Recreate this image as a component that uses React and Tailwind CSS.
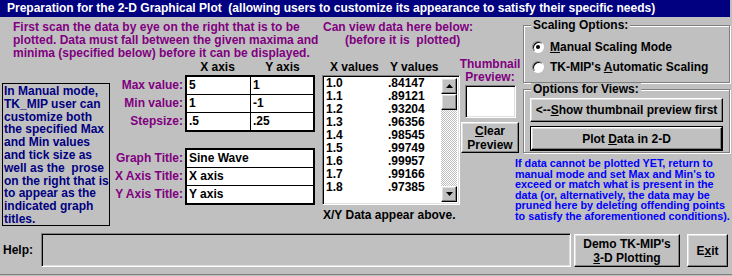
import React from "react";

const raised =
  "border border-t-white border-l-white border-r-black border-b-black shadow-[inset_-1px_-1px_0_#808080,inset_1px_1px_0_#dfdfdf]";
const sunken =
  "border border-t-[#808080] border-l-[#808080] border-r-white border-b-white shadow-[inset_1px_1px_0_#000,inset_-1px_-1px_0_#dfdfdf]";
const etched = "border border-[#808080] shadow-[inset_1px_1px_0_#fff,1px_1px_0_#fff]";

const listData = [
  ["1.0", ".84147"],
  ["1.1", ".89121"],
  ["1.2", ".93204"],
  ["1.3", ".96356"],
  ["1.4", ".98545"],
  ["1.5", ".99749"],
  ["1.6", ".99957"],
  ["1.7", ".99166"],
  ["1.8", ".97385"],
];

function Btn({ children, className = "", isDefault = false }) {
  return (
    <div className={`${isDefault ? "border border-black" : ""} ${className}`}>
      <div className={`h-full w-full flex flex-col items-center justify-center leading-[14px] ${raised}`}>
        {children}
      </div>
    </div>
  );
}

function Radio({ checked }) {
  return (
    <span className="inline-flex w-[12px] h-[12px] rounded-full bg-white border border-t-[#808080] border-l-[#808080] border-r-white border-b-white shadow-[inset_1px_1px_0_#000] items-center justify-center">
      {checked && <span className="w-[4px] h-[4px] rounded-full bg-black" />}
    </span>
  );
}

function GroupBox({ label, className = "", children }) {
  return (
    <div className={`relative ${etched} ${className}`}>
      <span className="absolute -top-[7px] left-[7px] px-[2px] bg-[#c0c0c0] leading-[13px] text-black">
        {label}
      </span>
      {children}
    </div>
  );
}

// labels on the left, white table of cells on the right
function FormGrid({ labels, rows, widths }) {
  return (
    <div className="flex">
      <div className="w-[73px] flex flex-col pt-[2px] text-right text-[#800080]">
        {labels.map((l, i) => (
          <div key={i} className="h-[18px] leading-[17px] whitespace-nowrap">
            {l}
          </div>
        ))}
      </div>
      <div className="ml-[2px] border-2 border-black bg-white">
        {rows.map((r, i) => (
          <div
            key={i}
            className={`flex ${i < rows.length - 1 ? "h-[18px] border-b border-black" : "h-[17px]"}`}
          >
            {r.map((c, j) => (
              <div
                key={j}
                className={`pl-[2px] leading-[17px] text-black ${widths[j]} ${j < r.length - 1 ? "border-r border-black" : ""}`}
              >
                {c}
              </div>
            ))}
          </div>
        ))}
      </div>
    </div>
  );
}

function Arrow({ down = false }) {
  return (
    <svg width="7" height="4" viewBox="0 0 7 4" className={down ? "rotate-180" : ""}>
      <path d="M3.5 0L7 4H0z" fill="#000" />
    </svg>
  );
}

export default function App() {
  return (
    <div className="w-[732px] h-[276px] bg-[#c0c0c0] flex flex-col overflow-hidden font-['Liberation_Sans',Arial,sans-serif] font-bold text-[12px] text-black">
      {/* caption bar */}
      <div className="h-[17px] mr-[2px] bg-[#000080] text-white pl-[7px] leading-[17px] whitespace-pre">
        Preparation for the 2-D Graphical Plot  (allowing users to customize its appearance to satisfy their specific needs)
      </div>

      <div className="h-[216px] flex">
        {/* left column */}
        <div className="w-[320px] flex flex-col">
          <p className="pl-[13px] pt-[4px] text-[#800080] leading-[13px] whitespace-nowrap">
            First scan the data by eye on the right that is to be
            <br />
            plotted. Data must fall between the given maxima and
            <br />
            minima (specified below) before it can be displayed.
          </p>
          <div className="flex items-start">
            <div className="mt-[23px] ml-[2px] w-[108px] h-[143px] border border-black px-[1px] pt-[1px] text-[#000080] leading-[12.8px] whitespace-nowrap">
              In Manual mode,
              <br />
              TK_MIP user can
              <br />
              customize both
              <br />
              the specified Max
              <br />
              and Min values
              <br />
              and tick size as
              <br />
              well as the&nbsp; prose
              <br />
              on the right that is
              <br />
              to appear as the
              <br />
              indicated graph
              <br />
              titles.
            </div>
            <div className="flex flex-col">
              <div className="flex h-[15px] leading-[15px]">
                <div className="w-[75px]" />
                <div className="w-[65px] text-center">X axis</div>
                <div className="w-[65px] text-center">Y axis</div>
              </div>
              <FormGrid
                labels={["Max value:", "Min value:", "Stepsize:"]}
                rows={[
                  ["5", "1"],
                  ["1", "-1"],
                  [".5", ".25"],
                ]}
                widths={["w-[64px]", "w-[62px]"]}
              />
              <div className="h-[16px]" />
              <FormGrid
                labels={["Graph Title:", "X Axis Title:", "Y Axis Title:"]}
                rows={[["Sine Wave"], ["X axis"], ["Y axis"]]}
                widths={["w-[126px]"]}
              />
            </div>
          </div>
        </div>

        {/* data list column */}
        <div className="w-[200px] flex flex-col">
          <div className="pt-[4px] text-[#800080] leading-[13px] whitespace-pre">
            <div className="pl-[3px]">Can view data here below:</div>
            <div className="pl-[25px]">(before it is  plotted)</div>
          </div>
          <div className="mt-[13px] flex">
            <div className="w-[140px] flex flex-col">
              <div className="flex h-[15px] leading-[15px]">
                <div className="pl-[10px] w-[70px]">X values</div>
                <div>Y values</div>
              </div>
              <div className={`ml-[2px] w-[138px] h-[130px] bg-white flex ${sunken}`}>
                <div className="flex-1 pl-[3px] pt-[1px]">
                  {listData.map(([x, y]) => (
                    <div key={x} className="flex h-[13px] leading-[13px]">
                      <div className="w-[62px]">{x}</div>
                      <div>{y}</div>
                    </div>
                  ))}
                </div>
                <div className="w-[16px] my-[2px] mr-[2px] flex flex-col bg-[repeating-conic-gradient(#c0c0c0_0%_25%,#ffffff_0%_50%)] bg-[length:2px_2px]">
                  <div className={`h-[16px] bg-[#c0c0c0] flex items-center justify-center ${raised}`}>
                    <Arrow />
                  </div>
                  <div className={`h-[16px] bg-[#c0c0c0] ${raised}`} />
                  <div className="flex-1" />
                  <div className={`h-[16px] bg-[#c0c0c0] flex items-center justify-center ${raised}`}>
                    <Arrow down />
                  </div>
                </div>
              </div>
              <div className="mt-[4px] pl-[3px] leading-[13px]">X/Y Data appear above.</div>
            </div>
            <div className="w-[60px] -mt-[2px] flex flex-col items-center">
              <div className="text-[#800080] leading-[13px] text-center">
                Thumbnail
                <br />
                Preview:
              </div>
              <div className={`mt-[1px] w-[51px] h-[33px] bg-white ${sunken}`} />
              <Btn className="mt-[4px] w-[58px] h-[31px]">
                <span>
                  <u className="underline-offset-[1px]">C</u>lear
                </span>
                <span>Preview</span>
              </Btn>
            </div>
          </div>
        </div>

        {/* options column */}
        <div className="w-[212px] flex flex-col">
          <GroupBox label="Scaling Options:" className="mt-[8px] ml-[3px] w-[207px] h-[58px]">
            <div className="pt-[15px] pl-[8px] flex flex-col gap-[8px]">
              <div className="flex items-center h-[12px] gap-[6px]">
                <Radio checked />
                <span className="leading-[12px]">
                  <u className="underline-offset-[1px]">M</u>anual Scaling Mode
                </span>
              </div>
              <div className="flex items-center h-[12px] gap-[6px]">
                <Radio />
                <span className="leading-[12px]">
                  TK-MIP's <u className="underline-offset-[1px]">A</u>utomatic Scaling
                </span>
              </div>
            </div>
          </GroupBox>
          <GroupBox label="Options for Views:" className="mt-[6px] ml-[3px] w-[207px] h-[64px]">
            <div className="pt-[8px] pl-[6px] flex flex-col">
              <Btn className="w-[193px] h-[24px]">
                <span>
                  &lt;--<u className="underline-offset-[1px]">S</u>how thumbnail preview first
                </span>
              </Btn>
              <Btn isDefault className="mt-[4px] w-[193px] h-[25px]">
                <span>
                  Plot <u className="underline-offset-[1px]">D</u>ata in 2-D
                </span>
              </Btn>
            </div>
          </GroupBox>
          <p className="mt-[5px] -ml-[5px] w-[217px] text-[#0000ff] text-[10.8px] leading-[10.6px] whitespace-nowrap">
            If data cannot be plotted YET, return to
            <br />
            manual mode and set Max and Min's to
            <br />
            exceed or match what is present in the
            <br />
            data (or, alternatively, the data may be
            <br />
            pruned here by deleting offending points
            <br />
            to satisfy the aforementioned conditions).
          </p>
        </div>
      </div>

      {/* help row */}
      <div className="h-[34px] flex items-start">
        <div className="w-[41px] pl-[3px] self-center leading-[13px]">Help:</div>
        <div className={`w-[530px] h-[34px] bg-[#c0c0c0] ${sunken}`} />
        <Btn className="ml-[3px] mt-[1px] w-[106px] h-[33px]">
          <span>Demo TK-MIP's</span>
          <span>
            <u className="underline-offset-[1px]">3</u>-D Plotting
          </span>
        </Btn>
        <Btn className="ml-[7px] mt-[1px] w-[41px] h-[33px]">
          <span>
            E<u className="underline-offset-[1px]">x</u>it
          </span>
        </Btn>
      </div>
      <div className="mt-[7px] h-[1px] bg-[#808080]" />
    </div>
  );
}
